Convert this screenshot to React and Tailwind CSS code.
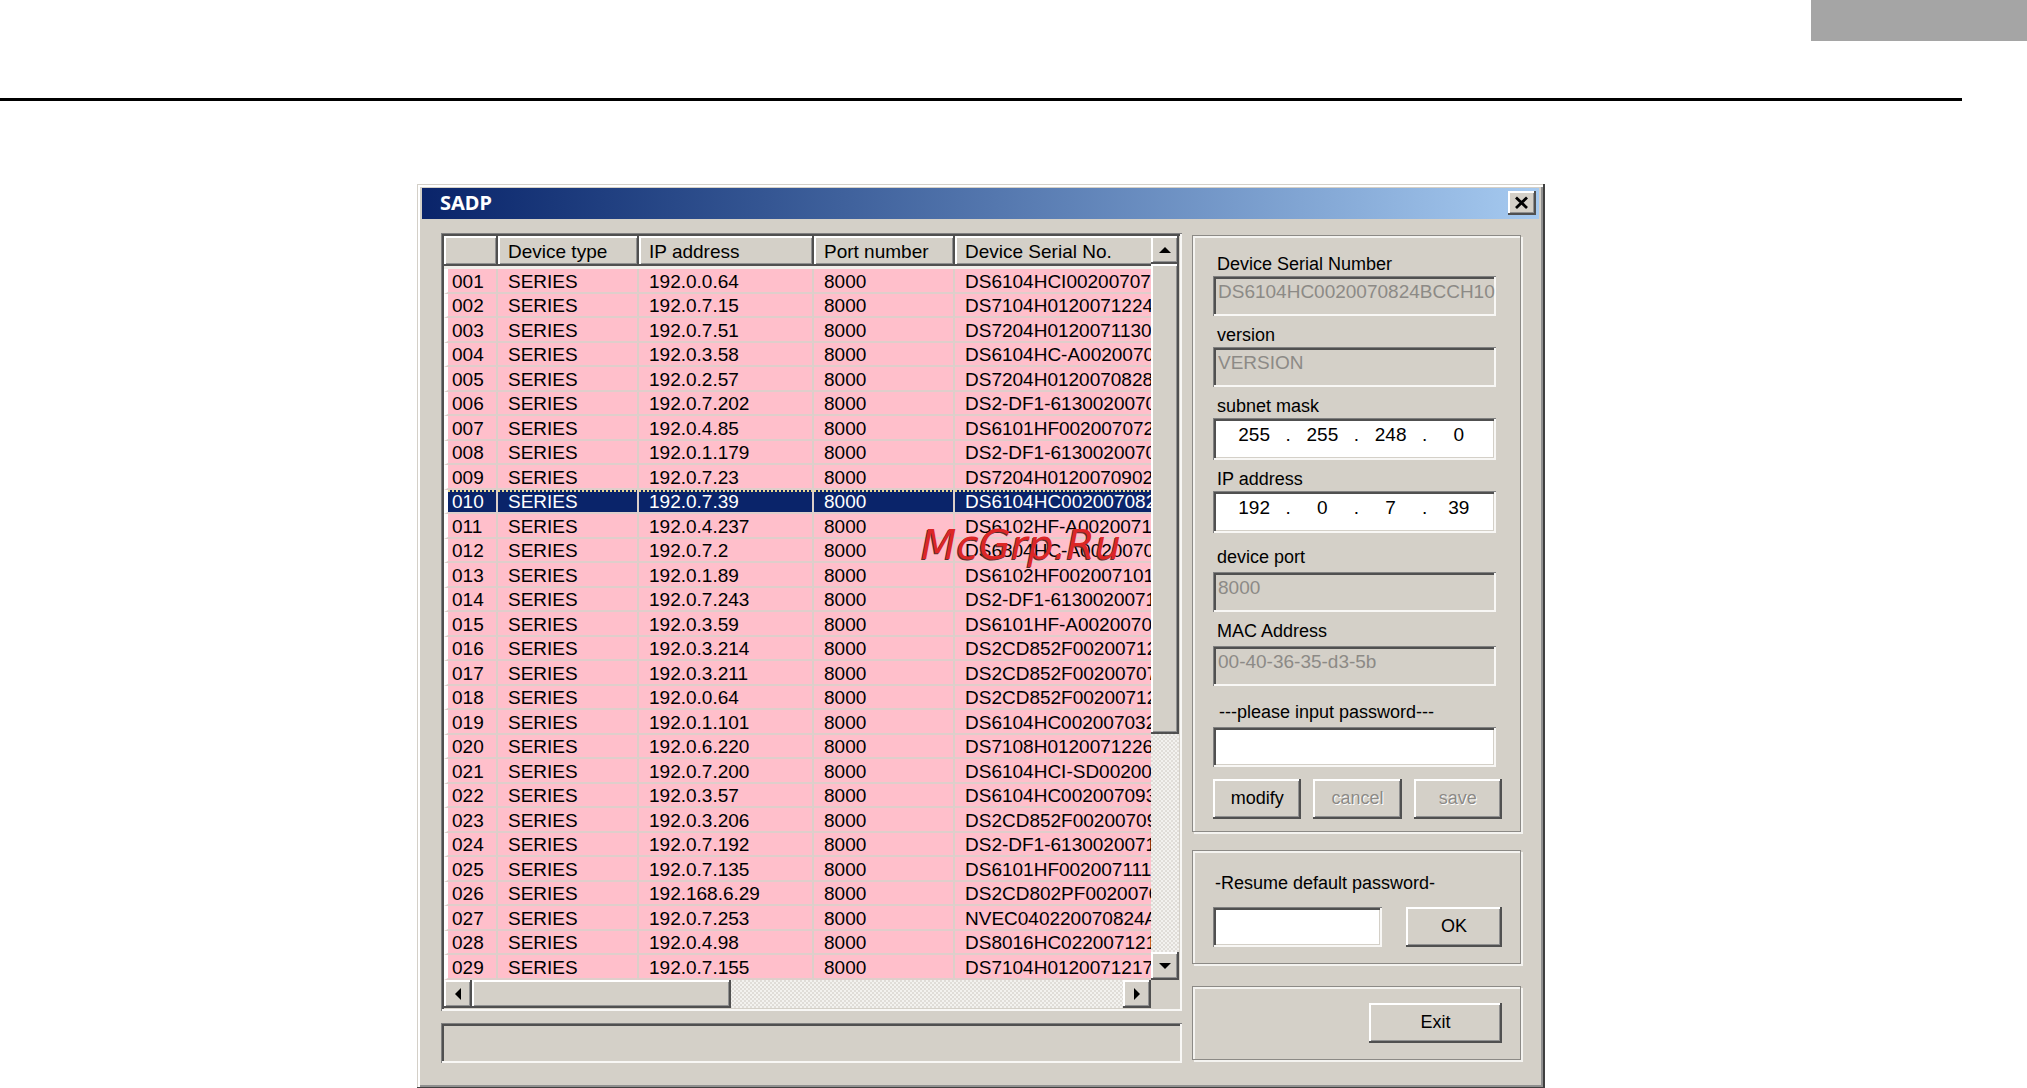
import { useState } from 'react';

const raised = 'bg-[#d4d0c8] shadow-[inset_-2px_-2px_#505050,inset_2px_2px_#ffffff,inset_-3px_-3px_#909090]';
const sunken = 'shadow-[inset_1px_1px_#808080,inset_-2px_-2px_#f8f7f5,inset_3px_3px_#505050,inset_-3px_-3px_#d4d0c8]';
const etched = 'border border-[#8c8a86] shadow-[inset_2px_2px_#f4f3f0,2px_2px_#f4f3f0]';
const dither = 'bg-[repeating-conic-gradient(#f3f2ef_0_25%,#e0ddd8_0_50%)] bg-[length:4px_4px]';

const devices = [
  ['192.0.0.64', 'DS6104HCI00200707'],
  ['192.0.7.15', 'DS7104H0120071224'],
  ['192.0.7.51', 'DS7204H0120071130'],
  ['192.0.3.58', 'DS6104HC-A0020070'],
  ['192.0.2.57', 'DS7204H0120070828'],
  ['192.0.7.202', 'DS2-DF1-6130020070'],
  ['192.0.4.85', 'DS6101HF002007072'],
  ['192.0.1.179', 'DS2-DF1-6130020070'],
  ['192.0.7.23', 'DS7204H0120070902'],
  ['192.0.7.39', 'DS6104HC002007082'],
  ['192.0.4.237', 'DS6102HF-A0020071'],
  ['192.0.7.2', 'DS6804HC-A0020070'],
  ['192.0.1.89', 'DS6102HF002007101'],
  ['192.0.7.243', 'DS2-DF1-6130020071'],
  ['192.0.3.59', 'DS6101HF-A0020070'],
  ['192.0.3.214', 'DS2CD852F00200712'],
  ['192.0.3.211', 'DS2CD852F00200707'],
  ['192.0.0.64', 'DS2CD852F00200712'],
  ['192.0.1.101', 'DS6104HC002007032'],
  ['192.0.6.220', 'DS7108H0120071226'],
  ['192.0.7.200', 'DS6104HCI-SD00200'],
  ['192.0.3.57', 'DS6104HC002007093'],
  ['192.0.3.206', 'DS2CD852F00200709'],
  ['192.0.7.192', 'DS2-DF1-6130020071'],
  ['192.0.7.135', 'DS6101HF002007111'],
  ['192.168.6.29', 'DS2CD802PF0020070'],
  ['192.0.7.253', 'NVEC040220070824A'],
  ['192.0.4.98', 'DS8016HC022007121'],
  ['192.0.7.155', 'DS7104H0120071217'],
];

const headers = ['', 'Device type', 'IP address', 'Port number', 'Device Serial No.'];

function Arrow({ label, points, className = '' }) {
  return (
    <button aria-label={label} className={`flex items-center justify-center flex-shrink-0 w-7 h-7 ${raised} ${className}`}>
      <svg width="14" height="14" viewBox="0 0 14 14">
        <polygon points={points} fill="#000" />
      </svg>
    </button>
  );
}

function DeviceTable({ selected, onSelect }) {
  return (
    <table className="w-full table-fixed border-separate border-spacing-0 bg-white">
      <colgroup>
        <col className="w-[54px]" />
        <col className="w-[141px]" />
        <col className="w-[175px]" />
        <col className="w-[141px]" />
        <col />
      </colgroup>
      <thead>
        <tr>
          {headers.map((h, i) => (
            <th
              key={i}
              className={`h-[30px] p-0 pt-0.5 pl-2.5 text-left font-normal leading-6 whitespace-nowrap ${
                i < 4 ? raised : 'bg-[#d4d0c8] shadow-[inset_0_-2px_#505050,inset_2px_2px_#ffffff,inset_0_-3px_#909090]'
              }`}
            >
              {h}
            </th>
          ))}
        </tr>
        <tr>
          <td colSpan={5} className="h-[3px] p-0 bg-[#f0eeea]" />
        </tr>
      </thead>
      <tbody>
        {devices.map(([ip, serial], i) => {
          const active = i === selected;
          const cells = [String(i + 1).padStart(3, '0'), 'SERIES', ip, '8000', serial];
          return (
            <tr key={i} onClick={() => onSelect(i)} className={active ? 'bg-[#0a246a] text-white' : 'bg-[#ffbfcb]'}>
              {cells.map((cell, c) => (
                <td
                  key={c}
                  className={`p-0 pt-0.5 leading-5 whitespace-nowrap border-b-2 border-b-[#dfcecb] ${
                    i % 2 ? 'h-6' : 'h-[25px]'
                  } ${c < 4 ? 'border-r-2 border-r-[#dccfc9]' : 'overflow-hidden'} ${
                    c === 0 ? 'border-l-4 border-l-white pl-1' : 'pl-2.5'
                  } ${active ? 'bg-[repeating-linear-gradient(90deg,#e8d890_0_2px,#0a246a_2px_4px)] bg-[length:100%_2px] bg-no-repeat' : ''}`}
                >
                  {cell}
                </td>
              ))}
            </tr>
          );
        })}
      </tbody>
    </table>
  );
}

function Field({ id, label, value, labelClass = 'mt-[7px]' }) {
  return (
    <>
      <label htmlFor={id} className={`block pl-1 leading-6 ${labelClass}`}>{label}</label>
      <input
        id={id}
        disabled
        defaultValue={value}
        className={`block w-full h-10 pl-[5px] pb-2 text-[19px] bg-[#d4d0c8] text-[#8c8a86] ${sunken}`}
      />
    </>
  );
}

function AddressField({ id, label, value }) {
  return (
    <>
      <label htmlFor={`${id}-0`} className="block pl-1 mt-[7px] leading-6">{label}</label>
      <div className={`flex items-center h-[42px] pl-2.5 pb-2 text-[19px] bg-white ${sunken}`}>
        {value.split('.').map((part, i) => (
          <div key={i} className="flex flex-1 min-w-0 items-center">
            <input
              id={`${id}-${i}`}
              aria-label={`${label} ${i + 1}`}
              defaultValue={part}
              className="w-full min-w-0 text-center"
            />
            <span className="w-1.5 flex-shrink-0 text-center">{i < 3 ? '.' : ''}</span>
          </div>
        ))}
      </div>
    </>
  );
}

function Button({ children, className = '', disabled = false }) {
  return (
    <button
      disabled={disabled}
      className={`h-10 pb-0.5 ${raised} ${className} ${disabled ? 'text-[#8c8a86] [text-shadow:1px_1px_#fff]' : 'text-black'}`}
    >
      {children}
    </button>
  );
}

export default function App() {
  const [selected, setSelected] = useState(9);

  return (
    <div className="bg-white text-black text-lg font-['Liberation_Sans',sans-serif]">
      <div className="ml-auto w-[216px] h-[41px] bg-[#a5a5a5]" />
      <div className="mr-[65px]">
        <hr className="mt-[57px] border-0 h-[3px] bg-black" />

        <main className="relative mt-[83px] mx-auto w-full max-w-[1128px] bg-[#d4d0c8] pt-1 pb-[26px] shadow-[inset_-2px_-2px_#404040,inset_1px_1px_#d4d0c8,inset_3px_3px_#ffffff,inset_-4px_-4px_#909090]">
          <header className="flex items-center justify-between ml-[5px] mr-1.5 h-[31px] pl-[18px] pr-[3px] pb-0.5 bg-linear-to-r from-[#0a246a] to-[#a6caf0]">
            <h1 className="text-white font-bold text-xl leading-6 font-['Noto_Sans',sans-serif]">SADP</h1>
            <button aria-label="Close" className={`flex items-center justify-center w-7 h-6 ${raised}`}>
              <svg width="16" height="14" viewBox="0 0 16 14">
                <path d="M2 1.5L13 12M13 1.5L2 12" stroke="#000" strokeWidth="2.8" />
              </svg>
            </button>
          </header>

          <div className="flex gap-2.5 px-6 pt-3.5">
            <div className="flex flex-col flex-1 min-w-0">
              <div className={`p-[3px] text-[19px] ${sunken}`}>
                <div className="flex">
                  <div className="flex-1 min-w-0">
                    <DeviceTable selected={selected} onSelect={setSelected} />
                  </div>
                  <div className={`flex flex-col w-7 ${dither}`}>
                    <Arrow label="Scroll up" points="7,4 13,10 1,10" />
                    <div className={`h-[470px] ${raised}`} />
                    <Arrow label="Scroll down" points="1,4 13,4 7,10" className="mt-auto" />
                  </div>
                </div>
                <div className="flex">
                  <div className={`flex flex-1 ${dither}`}>
                    <Arrow label="Scroll left" points="10,1 10,13 4,7" />
                    <div className={`w-[259px] ${raised}`} />
                    <Arrow label="Scroll right" points="4,1 10,7 4,13" className="ml-auto" />
                  </div>
                  <div className="w-7 h-7" />
                </div>
              </div>
              <div className={`mt-3 h-10 ${sunken}`} />
            </div>

            <div className="flex flex-col w-[329px] flex-shrink-0 pt-0.5">
              <section className={`pl-5 pr-[18px] pt-4 pb-3 ${etched}`}>
                <div className="mr-1.5">
                  <Field id="serial" label="Device Serial Number" value="DS6104HC0020070824BCCH10" labelClass="" />
                  <Field id="version" label="version" value="VERSION" />
                  <AddressField id="mask" label="subnet mask" value="255.255.248.0" />
                  <AddressField id="ip" label="IP address" value="192.0.7.39" />
                  <Field id="port" label="device port" value="8000" labelClass="mt-3 mb-[3px]" />
                  <Field id="mac" label="MAC Address" value="00-40-36-35-d3-5b" labelClass="mt-[7px] mb-[3px]" />
                  <label htmlFor="password" className="block pl-1.5 mt-3.5 mb-[3px] leading-6">---please input password---</label>
                  <input id="password" type="password" className={`block w-full h-10 px-1.5 bg-white ${sunken}`} />
                </div>
                <div className="flex gap-3 mt-3">
                  <Button className="flex-1">modify</Button>
                  <Button className="flex-1" disabled>cancel</Button>
                  <Button className="flex-1" disabled>save</Button>
                </div>
              </section>

              <section className={`mt-[18px] pl-5 pr-[18px] pt-5 pb-4 ${etched}`}>
                <label htmlFor="resume" className="block pl-0.5 mb-3 leading-6">-Resume default password-</label>
                <div className="flex gap-6">
                  <input id="resume" type="password" className={`flex-1 min-w-0 h-10 px-1.5 bg-white ${sunken}`} />
                  <Button className="w-24">OK</Button>
                </div>
              </section>

              <section className={`flex justify-end mt-[22px] pr-[18px] pt-4 pb-4 ${etched}`}>
                <Button className="w-[133px]">Exit</Button>
              </section>
            </div>
          </div>

          <span className="absolute left-[504px] top-[337px] text-[41px] leading-[48px] italic text-[#dc2626] pointer-events-none font-['DejaVu_Sans',sans-serif] [text-shadow:-1px_1px_#5a3030]">
            McGrp.Ru
          </span>
        </main>
      </div>
    </div>
  );
}
